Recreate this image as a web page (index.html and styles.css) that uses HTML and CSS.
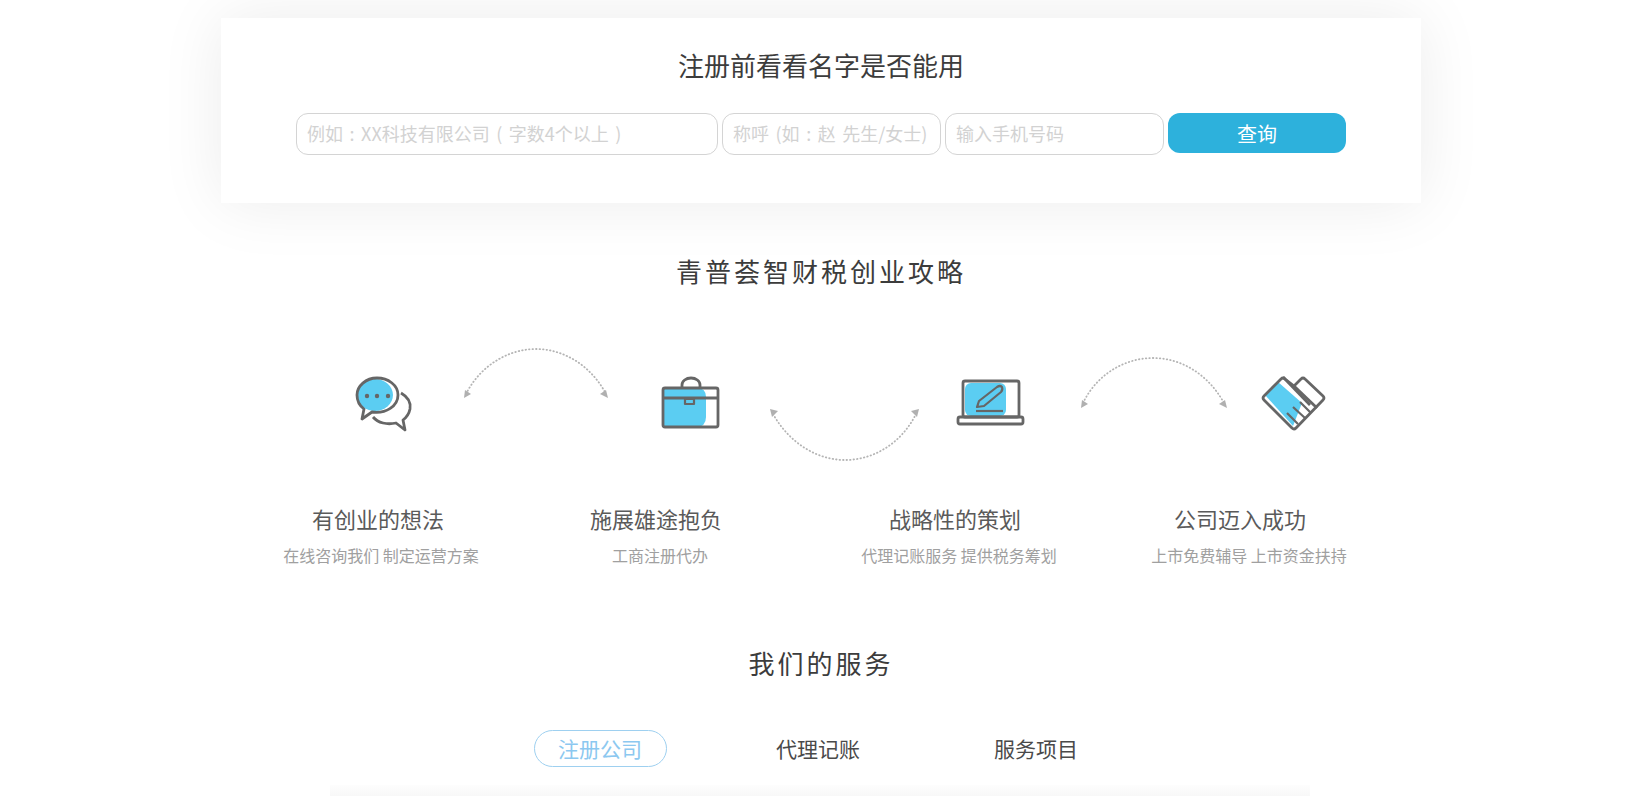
FILE: index.html
```html
<!DOCTYPE html>
<html lang="zh-CN">
<head>
    <meta charset="UTF-8">
    <meta name="viewport" content="width=device-width, initial-scale=1.0">
    <title>青普荟智财税</title>
    <link rel="stylesheet" href="styles.css">
</head>
<body>
    <div class="page">
        <section class="name-check">
            <h2 class="name-title">注册前看看名字是否能用</h2>
            <form class="name-form">
                <input class="field field-company" type="text" placeholder="例如 : XX科技有限公司 ( 字数4个以上 )">
                <input class="field field-short" type="text" placeholder="称呼 (如 : 赵 先生/女士)">
                <input class="field field-short" type="text" placeholder="输入手机号码">
                <button class="query-btn" type="button">查询</button>
            </form>
        </section>

        <h2 class="section-title">青普荟智财税创业攻略</h2>

        <!-- flow diagram, coordinates are page pixels -->
        <svg class="flow" viewBox="221 340 1200 130" width="1200" height="130">
            <g class="arc">
                <path d="M466 394C480 366 508 349 536 349C565 349 592 367 606 394"/>
                <path d="M773 414C790 444 818 460 845 460C873 460 901 444 916 414"/>
                <path d="M1083 403C1097 374 1125 358 1153 358C1181 358 1208 374 1224 403"/>
            </g>
            <g class="arrow">
                <path d="M464 398L465 390L471 394Z"/>
                <path d="M608 398L600 394L606 390Z"/>
                <path d="M770 409L778 411L772 417Z"/>
                <path d="M919 409L917 417L911 411Z"/>
                <path d="M1081 408L1082 400L1088 404Z"/>
                <path d="M1227 408L1219 404L1225 400Z"/>
            </g>

            <!-- chat -->
            <ellipse class="blue" cx="375" cy="395" rx="18" ry="16"/>
            <path class="line" d="M364 409L362 419L372 412C386 414 398 406 398 395C398 385 388 378 377 378C366 378 357 386 357 395C357 401 360 406 364 409Z"/>
            <path class="line" d="M401 393C408 397 411 403 410 409C409 414 407 417 403 420L405 430L396 423C387 425 378 423 373 417"/>
            <circle class="dot" cx="367" cy="396" r="2.2"/>
            <circle class="dot" cx="377" cy="396" r="2.2"/>
            <circle class="dot" cx="388" cy="396" r="2.2"/>

            <!-- briefcase -->
            <path class="blue" d="M663 388H697Q706 388 706 397V417Q706 427 696 427H663Z"/>
            <rect class="line" x="663" y="388" width="55" height="39" rx="2"/>
            <path class="line" d="M682 388V385C682 381 686 378 691 378C696 378 700 381 700 385V388"/>
            <path class="line" d="M663 398H718"/>
            <rect class="line-thin" x="685" y="399" width="9" height="5"/>

            <!-- laptop -->
            <rect class="blue" x="965" y="383" width="41" height="33" rx="6"/>
            <rect class="line" x="963" y="381" width="56" height="36" rx="2"/>
            <rect class="line" x="958" y="417" width="65" height="7" rx="2"/>
            <path class="line-thin" d="M977 407L979 401L997 387Q1000 385 1002 387Q1003 390 1001 392L984 406Z"/>
            <path class="line-thin" d="M976 411H1003"/>

            <!-- handshake -->
            <path class="blue" d="M1265 395L1278 382L1302 403L1293 426Z"/>
            <path class="line" d="M1283 377L1310 405"/>
            <path class="line" d="M1294 386L1317 408"/>
            <path class="line" d="M1264 396L1281 379Q1283 377 1285 379L1294 386L1301 379Q1303 377 1305 379L1323 396Q1325 398 1323 400L1296 428Q1294 430 1292 428L1264 400Q1262 398 1264 396Z"/>
            <path class="line-thin" d="M1287 413L1298 424M1293 407L1305 418M1300 402L1311 413"/>
        </svg>

        <div class="steps">
            <div class="step step-1">
                <h3 class="step-name">有创业的想法</h3>
                <p class="step-desc">在线咨询我们 制定运营方案</p>
            </div>
            <div class="step step-2">
                <h3 class="step-name">施展雄途抱负</h3>
                <p class="step-desc">工商注册代办</p>
            </div>
            <div class="step step-3">
                <h3 class="step-name">战略性的策划</h3>
                <p class="step-desc">代理记账服务 提供税务筹划</p>
            </div>
            <div class="step step-4">
                <h3 class="step-name">公司迈入成功</h3>
                <p class="step-desc">上市免费辅导 上市资金扶持</p>
            </div>
        </div>

        <h2 class="section-title services-title">我们的服务</h2>

        <ul class="tabs">
            <li class="tab active">注册公司</li>
            <li class="tab">代理记账</li>
            <li class="tab">服务项目</li>
        </ul>

        <div class="tab-panel"></div>
    </div>
</body>
</html>
```

FILE: styles.css
```css
/* Global Styles */
html, body {
    margin: 0;
    padding: 0;
    background: #fff;
}

body {
    padding-left: 2px;
    font-family: "Noto Sans CJK SC", "Noto Sans", sans-serif;
    color: #333;
    overflow: hidden;
}

h2, h3, p, ul {
    margin: 0;
    padding: 0;
    font-weight: 400;
}

.page {
    width: 1200px;
    height: 797px;
    margin: 0 auto;
    padding-top: 18px;
    box-sizing: border-box;
}

/* Name check card */
.name-check {
    height: 185px;
    padding-top: 27px;
    box-sizing: border-box;
    background: #fff;
    box-shadow: 0 0 60px rgba(0, 0, 0, 0.08);
}

.name-title {
    font-size: 26px;
    line-height: 40px;
    text-align: center;
    color: #3c3c3c;
}

.name-form {
    display: flex;
    align-items: flex-start;
    gap: 4px;
    margin-top: 28px;
    padding-left: 75px;
}

.field {
    height: 42px;
    padding: 0 10px 2px;
    box-sizing: border-box;
    border: 1px solid #d4d4d4;
    border-radius: 12px;
    font-family: inherit;
    font-size: 18px;
    word-spacing: 2.5px;
    outline: none;
}

.field::placeholder {
    color: #d2d2d2;
    opacity: 1;
}

.field-company {
    width: 422px;
}

.field-short {
    width: 219px;
}

.query-btn {
    width: 178px;
    height: 40px;
    border: 0;
    border-radius: 12px;
    background: #2db1dc;
    color: #fff;
    font-family: inherit;
    font-size: 20px;
    cursor: pointer;
}

/* Section headings */
.section-title {
    margin-top: 48px;
    font-size: 26px;
    line-height: 40px;
    letter-spacing: 3px;
    text-align: center;
    color: #3c3c3c;
}

.services-title {
    margin-top: 76px;
}

/* Flow diagram */
.flow {
    display: block;
    margin-top: 49px;
}

.arc path {
    fill: none;
    stroke: #b4b4b4;
    stroke-width: 1.8;
    stroke-linecap: round;
    stroke-dasharray: 0.5 3;
}

.arrow path {
    fill: #b0b0b0;
}

.blue {
    fill: #5bcdf2;
}

.line {
    fill: none;
    stroke: #666;
    stroke-width: 2.8;
    stroke-linejoin: round;
}

.line-thin {
    fill: none;
    stroke: #666;
    stroke-width: 2.2;
    stroke-linejoin: round;
}

.dot {
    fill: #666;
}

/* Steps */
.steps {
    display: flex;
    margin-top: 33px;
    margin-left: 37px;
}

.step {
    text-align: center;
}

.step-1 { width: 240px; }
.step-2 { width: 316px; }
.step-3 { width: 282px; }
.step-4 { width: 288px; }

.step-name {
    font-size: 22px;
    line-height: 30px;
    color: #5a5a5a;
}

.step-desc {
    margin-top: 10px;
    font-size: 16px;
    line-height: 24px;
    color: #a0a0a0;
}

.step-1 .step-desc { padding-left: 6px; }
.step-2 .step-desc { padding-left: 8px; }
.step-3 .step-desc { padding-left: 8px; }
.step-4 .step-desc { padding-left: 18px; }

/* Tabs */
.tabs {
    display: flex;
    justify-content: center;
    gap: 85px;
    margin-top: 47px;
    padding-right: 6px;
    list-style: none;
}

.tab {
    width: 133px;
    height: 37px;
    box-sizing: border-box;
    border: 1px solid transparent;
    border-radius: 19px;
    font-size: 21px;
    line-height: 35px;
    text-align: center;
    color: #4a4a4a;
}

.tab.active {
    border-color: #9ed0f0;
    color: #8cc8f0;
}

.tab-panel {
    width: 980px;
    height: 11px;
    margin: 18px 0 0 109px;
    background: linear-gradient(#fdfdfd, #f8f8f8);
}
```
